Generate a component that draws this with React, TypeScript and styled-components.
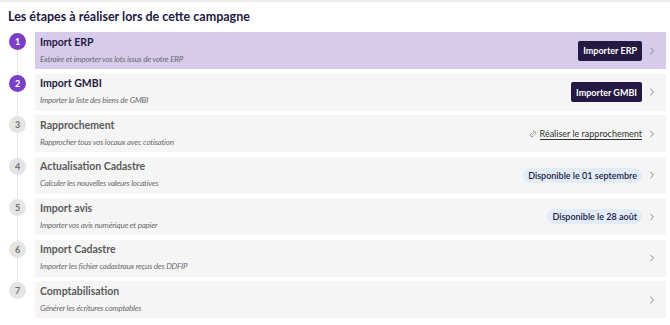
import React from 'react';
import styled, { createGlobalStyle } from 'styled-components';
import { Link2, ChevronRight } from 'lucide-react';

const GlobalStyle = createGlobalStyle`
  body {
    margin: 0;
    background: #fff;
    font-family: Lato, 'Open Sans', sans-serif;
  }
`;

type Step = {
  id: number;
  title: string;
  subtitle: string;
  done?: boolean;
  selected?: boolean;
  action?: { kind: 'button' | 'link' | 'badge'; label: string };
};

const steps: Step[] = [
  { id: 1, title: 'Import ERP', subtitle: 'Extraire et importer vos lots issus de votre ERP', done: true, selected: true, action: { kind: 'button', label: 'Importer ERP' } },
  { id: 2, title: 'Import GMBI', subtitle: 'Importer la liste des biens de GMBI', done: true, action: { kind: 'button', label: 'Importer GMBI' } },
  { id: 3, title: 'Rapprochement', subtitle: 'Rapprocher tous vos locaux avec cotisation', action: { kind: 'link', label: 'Réaliser le rapprochement' } },
  { id: 4, title: 'Actualisation Cadastre', subtitle: 'Calculer les nouvelles valeurs locatives', action: { kind: 'badge', label: 'Disponible le 01 septembre' } },
  { id: 5, title: 'Import avis', subtitle: 'Importer vos avis numérique et papier', action: { kind: 'badge', label: 'Disponible le 28 août' } },
  { id: 6, title: 'Import Cadastre', subtitle: 'Importer les fichier cadastraux reçus des DDFIP' },
  { id: 7, title: 'Comptabilisation', subtitle: 'Générer les écritures comptables' },
];

const Page = styled.div`
  border-top: 2px solid #ececec;
  padding: 7px 4px 0 8px;
`;

const Title = styled.h2`
  margin: 0 0 7px;
  font-size: 12.5px;
  font-weight: 700;
  color: #231942;
  line-height: 16px;
`;

const List = styled.div`
  display: flex;
  flex-direction: column;
  gap: 4.5px;
`;

const StepRow = styled.div<{ $last: boolean }>`
  position: relative;
  display: flex;
  align-items: stretch;
  gap: 9px;

  &::before {
    content: '';
    display: ${(p) => (p.$last ? 'none' : 'block')};
    position: absolute;
    left: 9px;
    top: 18px;
    bottom: -6px;
    border-left: 1px dotted #cfcfcf;
  }
`;

const Bullet = styled.div<{ $done: boolean }>`
  flex: none;
  width: 17px;
  height: 17px;
  margin: 1px 0 0 1px;
  border-radius: 50%;
  display: flex;
  align-items: center;
  justify-content: center;
  font-size: 9px;
  font-weight: 700;
  color: ${(p) => (p.$done ? '#fff' : '#6f6f6f')};
  background: ${(p) => (p.$done ? '#7b3fc6' : '#e4e4e4')};
  position: relative;
  z-index: 1;
`;

const Card = styled.div<{ $selected: boolean }>`
  flex: 1;
  height: 37px;
  box-sizing: border-box;
  padding: 0 8px 2px 5px;
  display: flex;
  align-items: center;
  background: ${(p) => (p.$selected ? '#d6cbea' : '#f5f5f5')};
`;

const Texts = styled.div`
  flex: 1;
  display: flex;
  flex-direction: column;
  gap: 7px;
`;

const StepTitle = styled.div<{ $done: boolean }>`
  font-size: 10.5px;
  font-weight: 700;
  line-height: 12px;
  color: ${(p) => (p.$done ? '#231942' : '#5a5a5a')};
`;

const StepSubtitle = styled.div`
  font-size: 8px;
  letter-spacing: -0.2px;
  font-style: italic;
  line-height: 9px;
  color: #6a6a6a;
`;

const Actions = styled.div`
  display: flex;
  align-items: center;
  gap: 4px;
  margin-bottom: -2px;
`;

const PrimaryButton = styled.button`
  border: none;
  background: #231942;
  color: #fff;
  font-family: inherit;
  font-size: 9px;
  font-weight: 700;
  height: 20px;
  padding: 0 5px;
  border-radius: 2px;
`;

const LinkAction = styled.a`
  display: flex;
  align-items: center;
  gap: 3px;
  font-size: 9px;
  color: #333;
  text-decoration: none;

  span {
    border-bottom: 1px solid #333;
    line-height: 11px;
  }
`;

const Badge = styled.span`
  background: #e2ecf8;
  color: #231942;
  font-size: 9px;
  font-weight: 600;
  padding: 2px 5px;
  border-radius: 8px;
  line-height: 11px;
`;

const Chevron = styled(ChevronRight)`
  color: #666;
  flex: none;
`;

export default function App() {
  return (
    <>
      <GlobalStyle />
      <Page>
        <Title>Les étapes à réaliser lors de cette campagne</Title>
        <List>
          {steps.map((s, i) => (
            <StepRow key={s.id} $last={i === steps.length - 1}>
              <Bullet $done={!!s.done}>{s.id}</Bullet>
              <Card $selected={!!s.selected}>
                <Texts>
                  <StepTitle $done={!!s.done}>{s.title}</StepTitle>
                  <StepSubtitle>{s.subtitle}</StepSubtitle>
                </Texts>
                <Actions>
                  {s.action?.kind === 'button' && <PrimaryButton>{s.action.label}</PrimaryButton>}
                  {s.action?.kind === 'link' && (
                    <LinkAction>
                      <Link2 size={8} strokeWidth={2} color="#777" style={{ transform: 'rotate(-45deg)' }} />
                      <span>{s.action.label}</span>
                    </LinkAction>
                  )}
                  {s.action?.kind === 'badge' && <Badge>{s.action.label}</Badge>}
                  <Chevron size={12} strokeWidth={1.5} />
                </Actions>
              </Card>
            </StepRow>
          ))}
        </List>
      </Page>
    </>
  );
}
